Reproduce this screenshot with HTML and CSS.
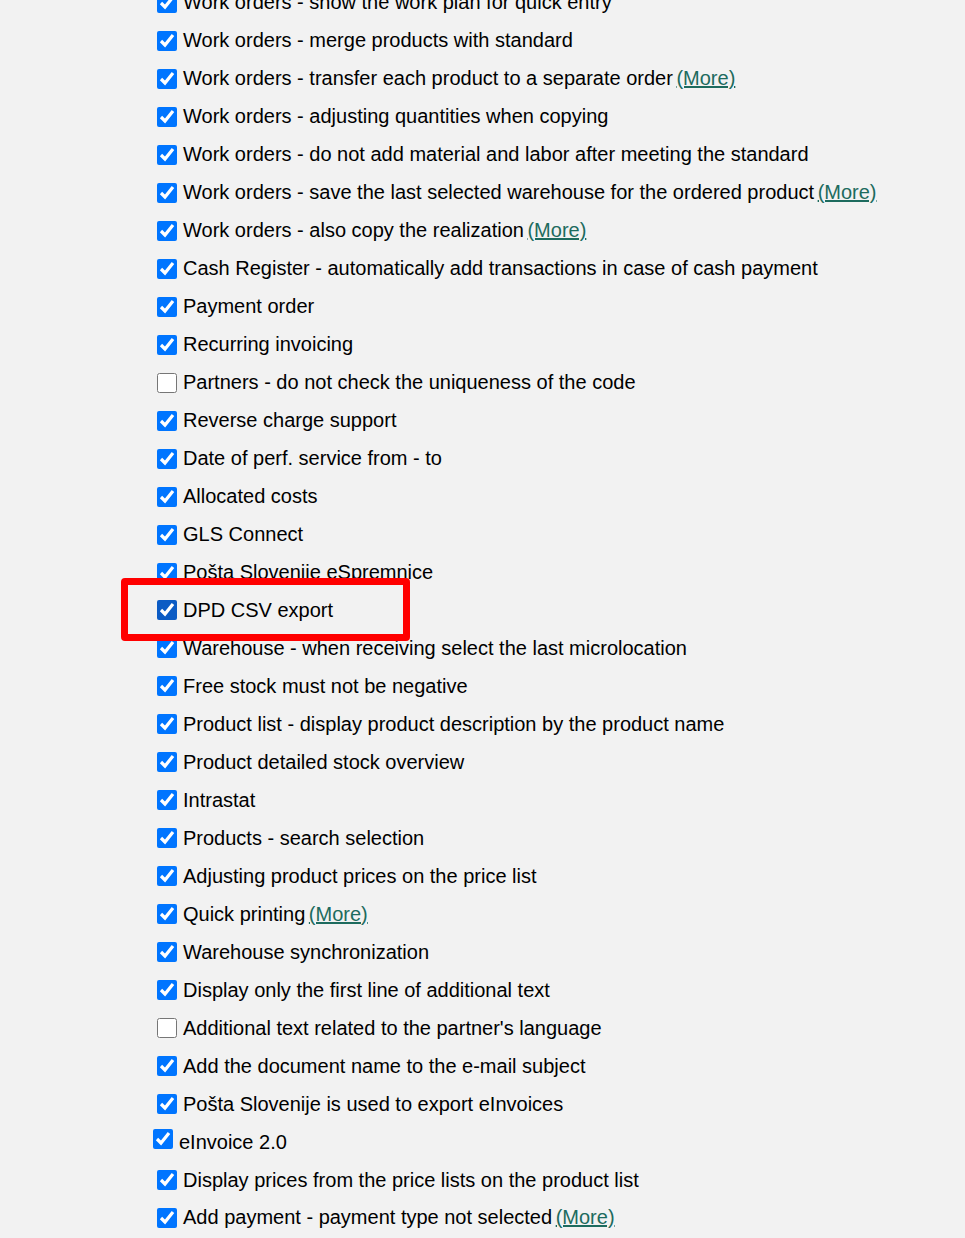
FILE: index.html
```html
<!DOCTYPE html>
<html lang="en">
<head>
    <meta charset="UTF-8">
    <title>Settings - Modules</title>
    <link rel="stylesheet" href="styles.css">
</head>
<body>
    <main class="modules">
        <label class="module"><input type="checkbox" checked>Work orders - show the work plan for quick entry</label>
        <label class="module"><input type="checkbox" checked>Work orders - merge products with standard</label>
        <label class="module"><input type="checkbox" checked>Work orders - transfer each product to a separate order <a href="#">(More)</a></label>
        <label class="module"><input type="checkbox" checked>Work orders - adjusting quantities when copying</label>
        <label class="module"><input type="checkbox" checked>Work orders - do not add material and labor after meeting the standard</label>
        <label class="module"><input type="checkbox" checked>Work orders - save the last selected warehouse for the ordered product <a href="#">(More)</a></label>
        <label class="module"><input type="checkbox" checked>Work orders - also copy the realization <a href="#">(More)</a></label>
        <label class="module"><input type="checkbox" checked>Cash Register - automatically add transactions in case of cash payment</label>
        <label class="module"><input type="checkbox" checked>Payment order</label>
        <label class="module"><input type="checkbox" checked>Recurring invoicing</label>
        <label class="module"><input type="checkbox">Partners - do not check the uniqueness of the code</label>
        <label class="module"><input type="checkbox" checked>Reverse charge support</label>
        <label class="module"><input type="checkbox" checked>Date of perf. service from - to</label>
        <label class="module"><input type="checkbox" checked>Allocated costs</label>
        <label class="module"><input type="checkbox" checked>GLS Connect</label>
        <label class="module"><input type="checkbox" checked>Pošta Slovenije eSpremnice</label>
        <label class="module highlight"><input type="checkbox" checked>DPD CSV export</label>
        <label class="module"><input type="checkbox" checked>Warehouse - when receiving select the last microlocation</label>
        <label class="module"><input type="checkbox" checked>Free stock must not be negative</label>
        <label class="module"><input type="checkbox" checked>Product list - display product description by the product name</label>
        <label class="module"><input type="checkbox" checked>Product detailed stock overview</label>
        <label class="module"><input type="checkbox" checked>Intrastat</label>
        <label class="module"><input type="checkbox" checked>Products - search selection</label>
        <label class="module"><input type="checkbox" checked>Adjusting product prices on the price list</label>
        <label class="module"><input type="checkbox" checked>Quick printing <a href="#">(More)</a></label>
        <label class="module"><input type="checkbox" checked>Warehouse synchronization</label>
        <label class="module"><input type="checkbox" checked>Display only the first line of additional text</label>
        <label class="module"><input type="checkbox">Additional text related to the partner's language</label>
        <label class="module"><input type="checkbox" checked>Add the document name to the e-mail subject</label>
        <label class="module"><input type="checkbox" checked>Pošta Slovenije is used to export eInvoices</label>
        <label class="module module-new"><input type="checkbox" checked>eInvoice 2.0</label>
        <label class="module"><input type="checkbox" checked>Display prices from the price lists on the product list</label>
        <label class="module"><input type="checkbox" checked>Add payment - payment type not selected <a href="#">(More)</a></label>
    </main>
</body>
</html>
```

FILE: styles.css
```css
*, *::before, *::after {
    box-sizing: border-box;
}

body {
    margin: 0;
    font-family: 'Liberation Sans', Arial, sans-serif;
    font-size: 20px;
    color: #000;
    background-color: #f2f2f2;
    overflow: hidden;
}

.modules {
    display: flex;
    flex-direction: column;
    margin-top: -16px;
    padding-left: 157px;
}

.module {
    display: flex;
    align-items: center;
    height: 37.97px;
    white-space: pre;
}

.module input {
    width: 20px;
    height: 20px;
    margin: 0 6px 0 0;
    accent-color: #0075ff;
}

.module a {
    margin-left: -2px;
    color: #1d6b5e;
    text-decoration: underline;
}

.module-new {
    margin-left: -4px;
}

.module-new input {
    margin-bottom: 6px;
}

.highlight {
    position: relative;
}

.highlight input {
    accent-color: #0b5bc4;
}

.highlight::after {
    content: "";
    position: absolute;
    left: -36px;
    top: -14px;
    width: 289px;
    height: 63px;
    border: 7px solid #ff0000;
    border-radius: 4px;
}
```
